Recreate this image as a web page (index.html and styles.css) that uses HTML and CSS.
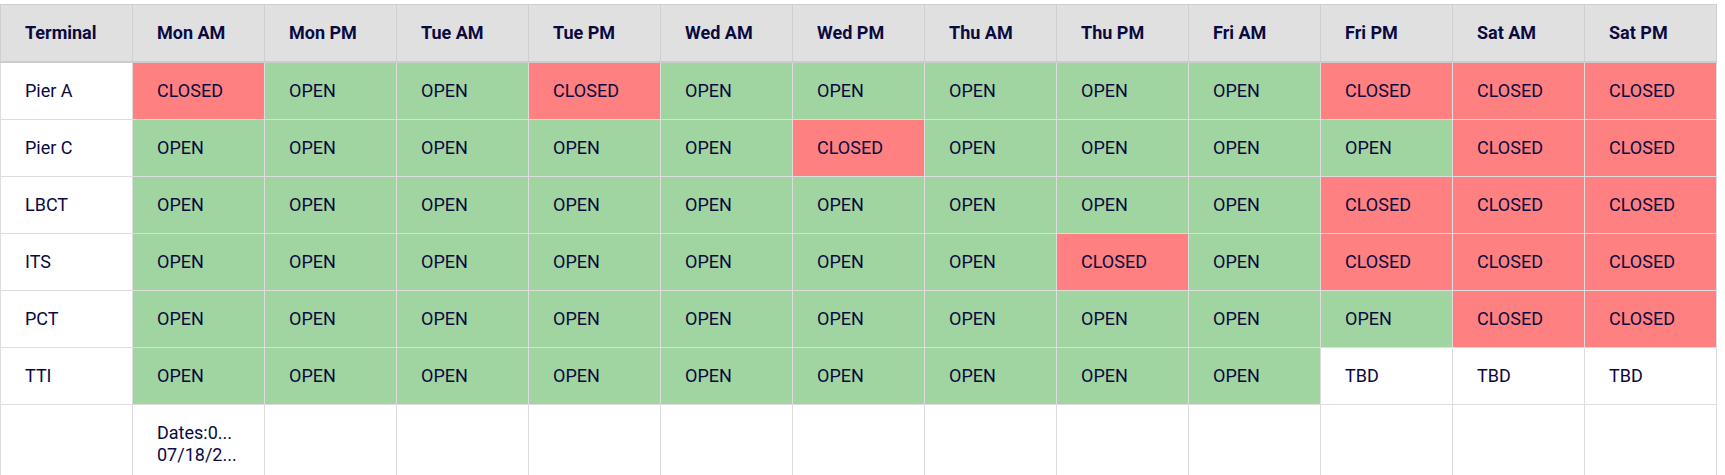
FILE: index.html
```html
<!DOCTYPE html>
<html lang="en">
<head>
<meta charset="utf-8">
<title>Terminal Schedule</title>
<link rel="stylesheet" href="styles.css">
</head>
<body>
<div class="wrap">
<table class="sched">
<colgroup>
<col><col><col><col><col><col><col><col><col><col><col><col><col>
</colgroup>
<thead>
<tr>
<th>Terminal</th><th>Mon AM</th><th>Mon PM</th><th>Tue AM</th><th>Tue PM</th><th>Wed AM</th><th>Wed PM</th><th>Thu AM</th><th>Thu PM</th><th>Fri AM</th><th>Fri PM</th><th>Sat AM</th><th>Sat PM</th>
</tr>
</thead>
<tbody>
<tr>
<td>Pier A</td>
<td class="closed">CLOSED</td><td class="open">OPEN</td><td class="open">OPEN</td><td class="closed">CLOSED</td><td class="open">OPEN</td><td class="open">OPEN</td><td class="open">OPEN</td><td class="open">OPEN</td><td class="open">OPEN</td><td class="closed">CLOSED</td><td class="closed">CLOSED</td><td class="closed">CLOSED</td>
</tr>
<tr>
<td>Pier C</td>
<td class="open">OPEN</td><td class="open">OPEN</td><td class="open">OPEN</td><td class="open">OPEN</td><td class="open">OPEN</td><td class="closed">CLOSED</td><td class="open">OPEN</td><td class="open">OPEN</td><td class="open">OPEN</td><td class="open">OPEN</td><td class="closed">CLOSED</td><td class="closed">CLOSED</td>
</tr>
<tr>
<td>LBCT</td>
<td class="open">OPEN</td><td class="open">OPEN</td><td class="open">OPEN</td><td class="open">OPEN</td><td class="open">OPEN</td><td class="open">OPEN</td><td class="open">OPEN</td><td class="open">OPEN</td><td class="open">OPEN</td><td class="closed">CLOSED</td><td class="closed">CLOSED</td><td class="closed">CLOSED</td>
</tr>
<tr>
<td>ITS</td>
<td class="open">OPEN</td><td class="open">OPEN</td><td class="open">OPEN</td><td class="open">OPEN</td><td class="open">OPEN</td><td class="open">OPEN</td><td class="open">OPEN</td><td class="closed">CLOSED</td><td class="open">OPEN</td><td class="closed">CLOSED</td><td class="closed">CLOSED</td><td class="closed">CLOSED</td>
</tr>
<tr>
<td>PCT</td>
<td class="open">OPEN</td><td class="open">OPEN</td><td class="open">OPEN</td><td class="open">OPEN</td><td class="open">OPEN</td><td class="open">OPEN</td><td class="open">OPEN</td><td class="open">OPEN</td><td class="open">OPEN</td><td class="open">OPEN</td><td class="closed">CLOSED</td><td class="closed">CLOSED</td>
</tr>
<tr>
<td>TTI</td>
<td class="open">OPEN</td><td class="open">OPEN</td><td class="open">OPEN</td><td class="open">OPEN</td><td class="open">OPEN</td><td class="open">OPEN</td><td class="open">OPEN</td><td class="open">OPEN</td><td class="open">OPEN</td><td>TBD</td><td>TBD</td><td>TBD</td>
</tr>
<tr>
<td></td>
<td><span class="line">Dates:0...</span><span class="line">07/18/2...</span></td>
<td></td><td></td><td></td><td></td><td></td><td></td><td></td><td></td><td></td><td></td><td></td>
</tr>
</tbody>
</table>
</div>
</body>
</html>
```
FILE: styles.css
```css
html, body {
  margin: 0;
  padding: 0;
  background: #ffffff;
}
body {
  font-family: Roboto, "Liberation Sans", sans-serif;
  color: #0a0a40;
}
.wrap {
  padding-top: 4px;
}
.sched {
  border-collapse: collapse;
  table-layout: fixed;
  width: 1717px;
}
.sched col {
  width: 132px;
}
.sched th,
.sched td {
  padding: 17px 24px;
  font-size: 18px;
  line-height: 22px;
  text-align: left;
  vertical-align: middle;
  white-space: nowrap;
  overflow: hidden;
}
.sched th {
  background: #e0e0e0;
  font-weight: 700;
  border: 1px solid #cfcfcf;
  border-bottom: 2px solid #cccccc;
}
.sched td {
  border: 1px solid #dddddd;
  font-weight: 400;
}
.sched td.open {
  background: #a0d4a0;
}
.sched td.closed {
  background: #ff8080;
}
.line {
  display: block;
}
```
